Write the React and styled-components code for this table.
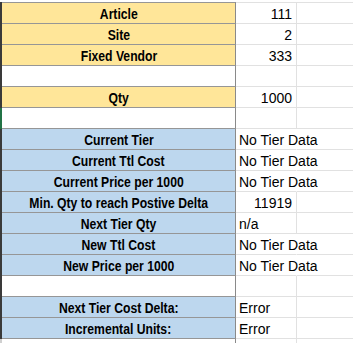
import React from 'react';
import styled, { createGlobalStyle } from 'styled-components';

const GlobalStyle = createGlobalStyle`
  html, body {
    margin: 0;
    padding: 0;
    background: #fff;
  }
  body {
    font-family: "Liberation Sans", Arial, sans-serif;
    color: #000;
  }
`;

const fills = {
  yellow: '#ffe699',
  blue: '#bdd7ee',
  none: '#ffffff',
};

const Sheet = styled.div`
  width: 353px;
  height: 343px;
  overflow: hidden;
  padding-top: 2px;
  box-sizing: border-box;
`;

const Row = styled.div`
  display: grid;
  grid-template-columns: 234px 61px 1fr;
  height: 21px;
  border-left: 2px solid ${props => props.edge || '#3a3a3a'};
  box-sizing: border-box;
  ${props => props.first && `
    & > div { border-top: 1px solid #e1e1e1; }
    & > div:first-child { border-top-color: #969696; }
    height: 22px;
  `}
`;

const Label = styled.div`
  background: ${props => fills[props.fill]};
  border-right: 1px solid #8a8a8a;
  border-bottom: 1px solid ${props => (props.soft ? '#e1e1e1' : '#969696')};
  display: flex;
  align-items: center;
  justify-content: center;
  padding-top: 1px;
  font-size: 14px;
  font-weight: bold;
  white-space: nowrap;
`;

// the sheet uses a narrow bold face, so squeeze the regular bold
const LabelText = styled.span`
  display: inline-block;
  transform: scaleX(0.87);
`;

const Value = styled.div`
  border-right: 1px solid ${props => (props.spill ? 'transparent' : '#e1e1e1')};
  border-bottom: 1px solid #e1e1e1;
  display: flex;
  align-items: center;
  justify-content: ${props => (props.num ? 'flex-end' : 'flex-start')};
  padding: 1px ${props => (props.num ? '4px' : '0')} 0 ${props => (props.num ? '0' : '3px')};
  font-size: 14px;
  white-space: nowrap;
  overflow: visible;
`;

const Spare = styled.div`
  border-bottom: 1px solid #e1e1e1;
`;

const rows = [
  { label: 'Article', value: '111', fill: 'yellow', num: true },
  { label: 'Site', value: '2', fill: 'yellow', num: true },
  { label: 'Fixed Vendor', value: '333', fill: 'yellow', num: true },
  { label: '', value: '', fill: 'none' },
  { label: 'Qty', value: '1000', fill: 'yellow', num: true },
  { label: '', value: '', fill: 'none', edge: '#217346' },
  { label: 'Current Tier', value: 'No Tier Data', fill: 'blue', spill: true },
  { label: 'Current Ttl Cost', value: 'No Tier Data', fill: 'blue', spill: true },
  { label: 'Current Price per 1000', value: 'No Tier Data', fill: 'blue', spill: true },
  { label: 'Min. Qty to reach Postive Delta', value: '11919', fill: 'blue', num: true },
  { label: 'Next Tier Qty', value: 'n/a', fill: 'blue' },
  { label: 'New Ttl Cost', value: 'No Tier Data', fill: 'blue', spill: true },
  { label: 'New Price per 1000', value: 'No Tier Data', fill: 'blue', spill: true },
  { label: '', value: '', fill: 'none' },
  { label: 'Next Tier Cost Delta:', value: 'Error', fill: 'blue' },
  { label: 'Incremental Units:', value: 'Error', fill: 'blue' },
];

const App = () => (
  <>
    <GlobalStyle />
    <Sheet>
      {rows.map((r, i) => (
        <Row key={i} first={i === 0} edge={r.edge}>
          <Label fill={r.fill}>
            {r.label && <LabelText>{r.label}</LabelText>}
          </Label>
          <Value num={r.num} spill={r.spill}>{r.value}</Value>
          <Spare />
        </Row>
      ))}
      <Row edge="#d0d0d0">
        <Label fill="none" soft />
        <Value />
        <Spare />
      </Row>
    </Sheet>
  </>
);

export default App;
